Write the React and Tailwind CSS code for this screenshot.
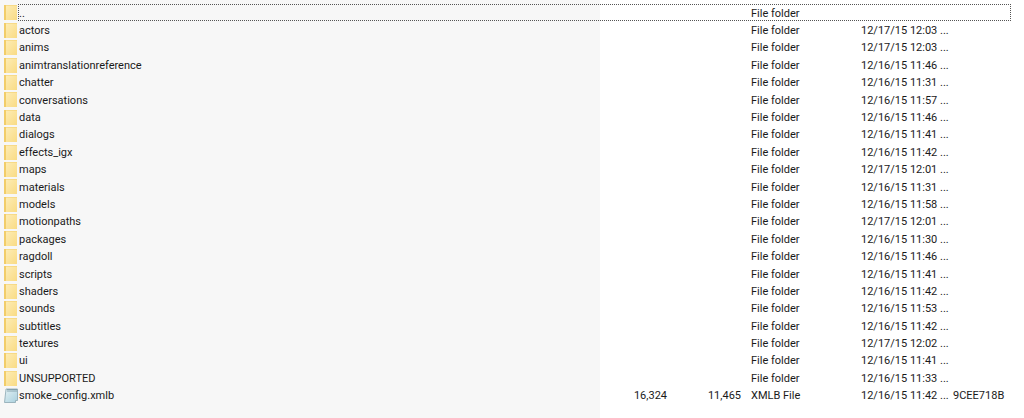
const folders = [
  ["..", ""],
  ["actors", "12/17/15 12:03 ..."],
  ["anims", "12/17/15 12:03 ..."],
  ["animtranslationreference", "12/16/15 11:46 ..."],
  ["chatter", "12/16/15 11:31 ..."],
  ["conversations", "12/16/15 11:57 ..."],
  ["data", "12/16/15 11:46 ..."],
  ["dialogs", "12/16/15 11:41 ..."],
  ["effects_igx", "12/16/15 11:42 ..."],
  ["maps", "12/17/15 12:01 ..."],
  ["materials", "12/16/15 11:31 ..."],
  ["models", "12/16/15 11:58 ..."],
  ["motionpaths", "12/17/15 12:01 ..."],
  ["packages", "12/16/15 11:30 ..."],
  ["ragdoll", "12/16/15 11:46 ..."],
  ["scripts", "12/16/15 11:41 ..."],
  ["shaders", "12/16/15 11:42 ..."],
  ["sounds", "12/16/15 11:53 ..."],
  ["subtitles", "12/16/15 11:42 ..."],
  ["textures", "12/17/15 12:02 ..."],
  ["ui", "12/16/15 11:41 ..."],
  ["UNSUPPORTED", "12/16/15 11:33 ..."],
];

const file = {
  name: "smoke_config.xmlb",
  size: "16,324",
  packed: "11,465",
  type: "XMLB File",
  date: "12/16/15 11:42 ...",
  crc: "9CEE718B",
};

function FolderIcon() {
  return (
    <svg width="13" height="15" viewBox="0 0 13 15" className="shrink-0">
      <defs>
        <linearGradient id="folderFill" x1="0" y1="0" x2="1" y2="1">
          <stop offset="0" stopColor="#fdecb4" />
          <stop offset="1" stopColor="#f9db84" />
        </linearGradient>
      </defs>
      <rect x="0" y="0" width="13" height="15" fill="#f2cd69" />
      <rect x="2" y="0.5" width="11" height="14.5" fill="url(#folderFill)" />
    </svg>
  );
}

function FileIcon() {
  return (
    <svg width="14" height="15" viewBox="0 0 14 15" className="shrink-0">
      <defs>
        <linearGradient id="fileFill" x1="0" y1="0" x2="1" y2="1">
          <stop offset="0" stopColor="#e4f1f4" />
          <stop offset="1" stopColor="#a9d0de" />
        </linearGradient>
      </defs>
      <path d="M2 1h11.5v11.5H11.5v2H0.5z" fill="url(#fileFill)" stroke="#8aa6b1" strokeWidth="0.8" />
      <path d="M3 1.5h10M3 3h10" stroke="#6f8c98" strokeWidth="0.7" />
    </svg>
  );
}

// one list cell, all rows share the same height
function Cell({ children, className = "" }) {
  return <div className={`flex h-[17.4px] items-center whitespace-nowrap ${className}`}>{children}</div>;
}

function Label({ children }) {
  return <span className="pt-[2px]">{children}</span>;
}

export default function App() {
  const blanks = folders.map(([name]) => <Cell key={name} />);

  return (
    <div className="relative flex h-[418px] w-[1024px] overflow-hidden bg-white font-['Roboto',sans-serif] text-[11px] text-[#1a1a1a]">
      {/* Name column, sorted so it has the grey tint */}
      <div className="h-full w-[600px] shrink-0 bg-[#f7f7f7] pl-[4px] pt-[4.2px]">
        {folders.map(([name]) => (
          <Cell key={name} className="gap-[2px]">
            <FolderIcon />
            <Label>{name}</Label>
          </Cell>
        ))}
        <Cell className="gap-[1px]">
          <FileIcon />
          <Label>{file.name}</Label>
        </Cell>
      </div>

      {/* Size */}
      <div className="w-[67px] shrink-0 pt-[4.2px]">
        {blanks}
        <Cell className="justify-end"><Label>{file.size}</Label></Cell>
      </div>

      {/* Packed */}
      <div className="w-[74px] shrink-0 pt-[4.2px]">
        {blanks}
        <Cell className="justify-end"><Label>{file.packed}</Label></Cell>
      </div>

      {/* Type */}
      <div className="w-[120px] shrink-0 pl-[10px] pt-[4.2px]">
        {folders.map(([name]) => (
          <Cell key={name}><Label>File folder</Label></Cell>
        ))}
        <Cell><Label>{file.type}</Label></Cell>
      </div>

      {/* Date */}
      <div className="w-[92px] shrink-0 pt-[4.2px]">
        {folders.map(([name, date]) => (
          <Cell key={name}><Label>{date}</Label></Cell>
        ))}
        <Cell><Label>{file.date}</Label></Cell>
      </div>

      {/* CRC */}
      <div className="flex-1 pt-[4.2px]">
        {blanks}
        <Cell><Label>{file.crc}</Label></Cell>
      </div>

      {/* Focus rectangle on the first row */}
      <div className="absolute left-[18px] top-[4px] h-[17px] w-[993px] border border-dotted border-[#555555]" />
    </div>
  );
}
